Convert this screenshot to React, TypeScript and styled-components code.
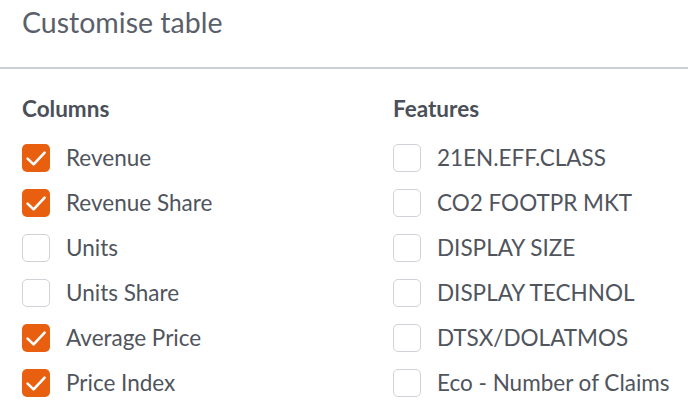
import React, { useState } from "react";
import styled, { createGlobalStyle } from "styled-components";

const GlobalStyle = createGlobalStyle`
  html, body {
    margin: 0;
    padding: 0;
    background: #ffffff;
    font-family: Lato, "Open Sans", sans-serif;
  }
`;

const columnItems = [
  { label: "Revenue", checked: true },
  { label: "Revenue Share", checked: true },
  { label: "Units", checked: false },
  { label: "Units Share", checked: false },
  { label: "Average Price", checked: true },
  { label: "Price Index", checked: true },
];

const featureItems = [
  { label: "21EN.EFF.CLASS", checked: false },
  { label: "CO2 FOOTPR MKT", checked: false },
  { label: "DISPLAY SIZE", checked: false },
  { label: "DISPLAY TECHNOL", checked: false },
  { label: "DTSX/DOLATMOS", checked: false },
  { label: "Eco - Number of Claims", checked: false },
];

type Item = { label: string; checked: boolean };

const CheckList: React.FC<{ title: string; items: Item[] }> = ({ title, items }) => {
  const [state, setState] = useState(items);

  const toggle = (idx: number) => {
    setState((prev) =>
      prev.map((it, i) => (i === idx ? { ...it, checked: !it.checked } : it))
    );
  };

  return (
    <Column>
      <Heading>{title}</Heading>
      {state.map((it, i) => (
        <Row key={it.label} onClick={() => toggle(i)}>
          <Box $checked={it.checked}>
            {it.checked && (
              <svg width="28" height="28" viewBox="0 0 28 28" fill="none">
                <path
                  d="M5.6 14.6 L11.6 20.4 L22.6 8.6"
                  stroke="#fff"
                  strokeWidth="2.6"
                  strokeLinecap="round"
                  strokeLinejoin="round"
                />
              </svg>
            )}
          </Box>
          <Label>{it.label}</Label>
        </Row>
      ))}
    </Column>
  );
};

const App: React.FC = () => {
  return (
    <>
      <GlobalStyle />
      <Panel>
        <Header>
          <Title>Customise table</Title>
        </Header>
        <Body>
          <CheckList title="Columns" items={columnItems} />
          <CheckList title="Features" items={featureItems} />
        </Body>
      </Panel>
    </>
  );
};

const Panel = styled.div`
  width: 688px;
  height: 406px;
  overflow: hidden;
  background: #fff;
`;

const Header = styled.div`
  height: 69px;
  padding: 4px 22px 0;
  box-sizing: border-box;
  border-bottom: 2px solid #cdd1d7;
`;

const Title = styled.h2`
  margin: 0;
  font-size: 28.5px;
  line-height: 36px;
  font-weight: 400;
  color: #5a5f69;
`;

const Body = styled.div`
  display: grid;
  grid-template-columns: 371px 1fr;
  padding: 26px 0 0 22px;
`;

const Column = styled.div`
  display: flex;
  flex-direction: column;
`;

const Heading = styled.h3`
  margin: 0 0 12px;
  font-size: 22.5px;
  line-height: 28px;
  font-weight: 700;
  color: #4a4f58;
`;

const Row = styled.div`
  display: flex;
  align-items: center;
  gap: 16px;
  height: 45px;
  cursor: pointer;
`;

const Box = styled.div<{ $checked: boolean }>`
  width: 28px;
  height: 28px;
  box-sizing: border-box;
  border-radius: 5px;
  display: flex;
  align-items: center;
  justify-content: center;
  flex-shrink: 0;
  background: ${(p) => (p.$checked ? "#e8600f" : "#fff")};
  border: ${(p) => (p.$checked ? "none" : "1.5px solid #cfd2d7")};
`;

const Label = styled.span`
  font-size: 22.5px;
  line-height: 28px;
  white-space: nowrap;
  color: #4f545d;
`;

export default App;
